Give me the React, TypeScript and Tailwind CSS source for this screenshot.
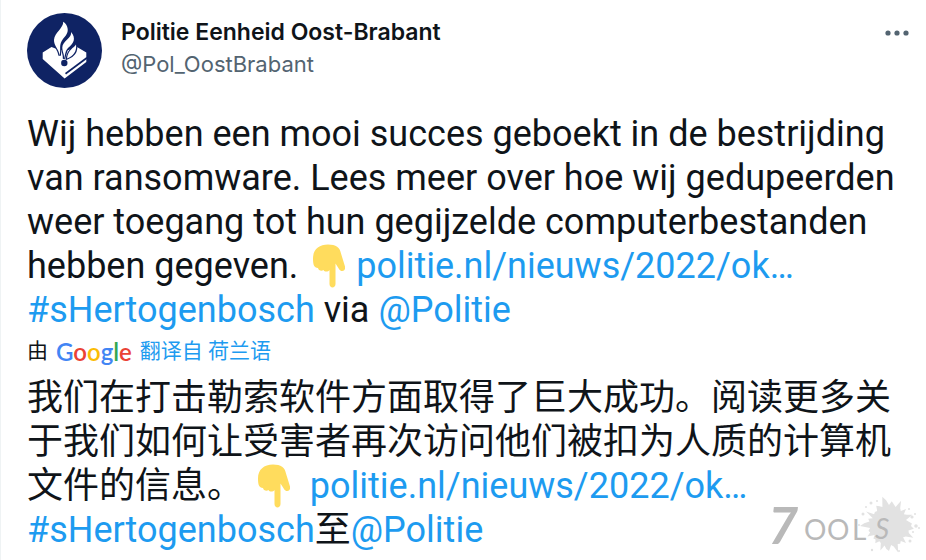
import { ReactNode } from 'react'

const splatRadii = [
  22, 25, 20, 21, 27, 20, 18, 24, 19, 21, 20, 28, 21, 19, 25, 23, 20, 26, 19, 18,
  22, 19, 20, 17, 24, 20, 21, 19, 29, 25, 20, 22, 18, 27, 19, 20, 19, 24, 22, 20,
  30, 26, 21, 25, 22, 20, 28, 21, 19, 24, 19, 21, 26, 18, 20, 23
]

const splatPoints = splatRadii
  .map((r, i) => {
    const angle = (i / splatRadii.length) * Math.PI * 2
    return `${(129 + r * Math.cos(angle)).toFixed(1)},${(36 + r * Math.sin(angle)).toFixed(1)}`
  })
  .join(' ')

const splatDrops = [
  [103, 24, 1.5], [99, 35, 1], [111, 13, 1.5], [149, 19, 1], [156, 36, 1.8],
  [153, 42, 1], [150, 51, 1.5], [152, 27, 1.6], [155, 24, 1], [117, 11, 1],
  [102, 49, 1], [112, 60, 1.2], [139, 61, 1], [106, 17, 1], [159, 38, 1]
]

const flames = [
  'M36.2 8.7c.5 6-8.7 11-9.2 18-.3 6 4.5 8.5 5.7 15.8 1.3-7-.7-9.5 2-14.5 2.5-4.5 6.5-6.5 6-12-.3-3-2-5.8-4.500-7.300Z',
  'M44 19c1.500 6-8.700 9-8.700 15.500 0 4.500 2.300 7 1.700 11.500 1.500-5 1-8 4.500-11.500 5-4 8-9 2.500-15.500Z',
  'M49 31.500c-2 3.500-8 5-9 14 6.500-2.500 10-7.500 9-14Z'
]

function Avatar() {
  return (
    <svg viewBox="0 0 75 75" className="size-[75px] shrink-0" aria-hidden="true">
      <circle cx="37.5" cy="37.5" r="37.5" fill="#0f2364" />
      <path fill="#fff" d="M15.7 39.5 24.5 34l8 3h9l8.5-3 9.3 5.5V49L37.6 65.5 15.7 46Z" />
      <path stroke="#0f2364" strokeWidth="1.7" d="M38.5 60.800 60 44.800" />
      {flames.map((d) => (
        <path key={d} d={d} fill="#0f2364" stroke="#0f2364" strokeWidth="2.4" />
      ))}
      {flames.map((d) => (
        <path key={d} d={d} fill="#fff" />
      ))}
      <circle cx="37.3" cy="50" r="3.2" fill="#0f2364" />
    </svg>
  )
}

function PointDown() {
  return (
    <svg viewBox="0 0 32 43" className="mr-0.5 ml-1.5 inline-block h-11 w-8 align-[-10px]" role="img" aria-label="👇">
      <path fill="#ffdc5d" d="M0 14C0 5 6 0 15 0c8 0 12 3 13 9l4 13c1 5-4 6-6 2.500L22.500 19v20.500c0 4.500-6 4.500-6 0V25.500c-1.500 2-5 2-6 0-2 1.500-5 .5-5.500-2C1 23.500 0 20 0 14Z" />
    </svg>
  )
}

function Link({ children }: { children: ReactNode }) {
  return <a href="#" className="text-[#1d9bf0]">{children}</a>
}

function GoogleLogo() {
  return (
    <span className="font-['Lato',sans-serif] text-[24px] font-semibold">
      <span className="text-[#4285f4]">G</span>
      <span className="text-[#ea4335]">o</span>
      <span className="text-[#fbbc05]">o</span>
      <span className="text-[#4285f4]">g</span>
      <span className="text-[#34a853]">l</span>
      <span className="text-[#ea4335]">e</span>
    </span>
  )
}

function Watermark() {
  return (
    <svg viewBox="0 0 166 70" className="absolute right-0 bottom-0 h-[70px] w-[166px]" role="img" aria-label="7ools">
      <g fill="#e2e2e2">
        <polygon points={splatPoints} />
        {splatDrops.map(([x, y, r]) => (
          <circle key={`${x}-${y}`} cx={x} cy={y} r={r} />
        ))}
      </g>
      <g fill="#b9b9b9" className="font-['Lato',sans-serif]">
        <text x="8" y="54" fontSize="52" fontWeight="700" className="italic">7</text>
        <text x="44" y="50" fontSize="28">O</text>
        <text x="67" y="50" fontSize="28">O</text>
        <text x="92" y="50" fontSize="28">L</text>
        <text x="115" y="49" fontSize="28" className="italic">S</text>
      </g>
    </svg>
  )
}

export default function App() {
  return (
    <article className="relative min-h-screen border-l border-[#eff3f4] bg-white pt-[13px] pl-[26px] font-['Roboto','Noto_Sans_CJK_SC',sans-serif] text-[#0f1419]">
      <header className="flex gap-[19px] pr-[17px] font-['Inter',sans-serif]">
        <Avatar />
        <div className="flex-1 pt-[3px] text-[22px] leading-8">
          <h1 className="text-[23px] leading-8 font-semibold">Politie Eenheid Oost-Brabant</h1>
          <p className="text-[#536471]">@Pol_OostBrabant</p>
        </div>
        <button type="button" aria-label="More" className="flex h-10 items-center">
          <svg viewBox="0 0 24 6" className="h-[6px] w-6" fill="#536471">
            <circle cx="3" cy="3" r="2.6" />
            <circle cx="12" cy="3" r="2.6" />
            <circle cx="21" cy="3" r="2.6" />
          </svg>
        </button>
      </header>
      <p className="mt-6 text-[36px] leading-[44px] whitespace-nowrap">
        Wij hebben een mooi succes geboekt in de bestrijding<br />
        van ransomware. Lees meer over hoe wij gedupeerden<br />
        weer toegang tot hun gegijzelde computerbestanden<br />
        hebben gegeven. <PointDown /> <Link>politie.nl/nieuws/2022/ok…</Link><br />
        <Link>#sHertogenbosch</Link> via <Link>@Politie</Link>
      </p>
      <div className="flex h-11 items-center gap-2 pb-1 text-[21px]">
        <span>由</span>
        <GoogleLogo />
        <Link>翻译自 荷兰语</Link>
      </div>
      <p className="text-[36px] leading-[44px] whitespace-nowrap">
        我们在打击勒索软件方面取得了巨大成功。阅读更多关<br />
        于我们如何让受害者再次访问他们被扣为人质的计算机<br />
        文件的信息。 <PointDown /> &nbsp;<Link>politie.nl/nieuws/2022/ok…</Link><br />
        <Link>#sHertogenbosch</Link>至<Link>@Politie</Link>
      </p>
      <Watermark />
    </article>
  )
}
